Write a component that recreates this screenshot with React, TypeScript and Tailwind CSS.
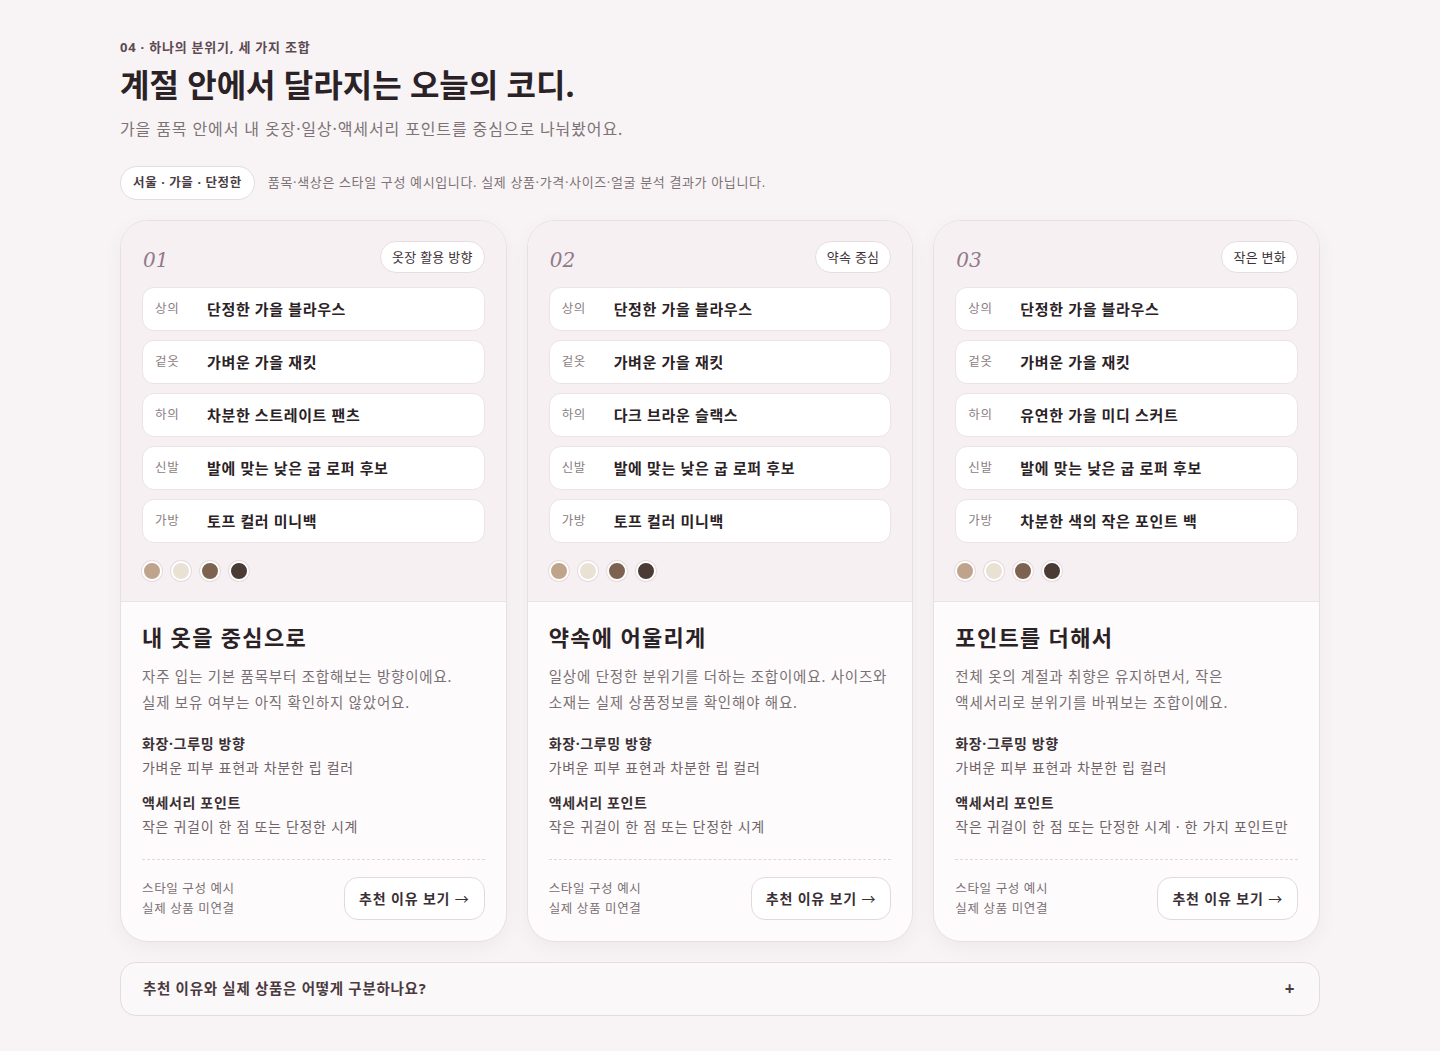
import React from 'react';

interface OutfitItem {
    label: string;
    value: string;
}

interface OutfitPlan {
    no: string;
    tag: string;
    items: OutfitItem[];
    title: string;
    body: string[];
    grooming: string;
    accessory: string;
}

const swatches = ['#bfa48b', '#e9e1d4', '#7d634f', '#4a3b35'];

const plans: OutfitPlan[] = [
    {
        no: '01',
        tag: '옷장 활용 방향',
        items: [
            {label: '상의', value: '단정한 가을 블라우스'},
            {label: '겉옷', value: '가벼운 가을 재킷'},
            {label: '하의', value: '차분한 스트레이트 팬츠'},
            {label: '신발', value: '발에 맞는 낮은 굽 로퍼 후보'},
            {label: '가방', value: '토프 컬러 미니백'},
        ],
        title: '내 옷을 중심으로',
        body: ['자주 입는 기본 품목부터 조합해보는 방향이에요.', '실제 보유 여부는 아직 확인하지 않았어요.'],
        grooming: '가벼운 피부 표현과 차분한 립 컬러',
        accessory: '작은 귀걸이 한 점 또는 단정한 시계',
    },
    {
        no: '02',
        tag: '약속 중심',
        items: [
            {label: '상의', value: '단정한 가을 블라우스'},
            {label: '겉옷', value: '가벼운 가을 재킷'},
            {label: '하의', value: '다크 브라운 슬랙스'},
            {label: '신발', value: '발에 맞는 낮은 굽 로퍼 후보'},
            {label: '가방', value: '토프 컬러 미니백'},
        ],
        title: '약속에 어울리게',
        body: ['일상에 단정한 분위기를 더하는 조합이에요. 사이즈와', '소재는 실제 상품정보를 확인해야 해요.'],
        grooming: '가벼운 피부 표현과 차분한 립 컬러',
        accessory: '작은 귀걸이 한 점 또는 단정한 시계',
    },
    {
        no: '03',
        tag: '작은 변화',
        items: [
            {label: '상의', value: '단정한 가을 블라우스'},
            {label: '겉옷', value: '가벼운 가을 재킷'},
            {label: '하의', value: '유연한 가을 미디 스커트'},
            {label: '신발', value: '발에 맞는 낮은 굽 로퍼 후보'},
            {label: '가방', value: '차분한 색의 작은 포인트 백'},
        ],
        title: '포인트를 더해서',
        body: ['전체 옷의 계절과 취향은 유지하면서, 작은', '액세서리로 분위기를 바꿔보는 조합이에요.'],
        grooming: '가벼운 피부 표현과 차분한 립 컬러',
        accessory: '작은 귀걸이 한 점 또는 단정한 시계 · 한 가지 포인트만',
    },
];

const OutfitCard: React.FC<{plan: OutfitPlan}> = ({plan}) => (
    <div className="flex flex-col overflow-hidden rounded-[28px] border border-[#e9dfe3] bg-[#fdfbfc] shadow-[0_6px_18px_rgba(90,60,70,0.06)]">
        {/* top: outfit pieces */}
        <div className="border-b border-[#ebe2e5] bg-[#f6f0f2] px-[21px] pt-5 pb-5">
            <div className="flex items-center justify-between">
                <span className="pl-px pt-[6px] font-['DejaVu_Serif',serif] text-[20px] italic leading-none tracking-normal text-[#92798a]">
                    {plan.no}
                </span>
                <span className="rounded-full border border-[#e6dde0] bg-white px-[11px] py-[6px] text-[13px] leading-[18px] tracking-[0.02em] text-[#3d3237]">
                    {plan.tag}
                </span>
            </div>
            <div className="mt-[14px] flex flex-col gap-[9px]">
                {plan.items.map((item, i) => (
                    <div key={i} className="flex h-[44px] items-center rounded-[12px] border border-[#ebe3e6] bg-white px-[12px]">
                        <span className="w-[52px] text-[12.5px] text-[#8a7d82]">{item.label}</span>
                        <span className="text-[15px] font-bold text-[#2b2226]">{item.value}</span>
                    </div>
                ))}
            </div>
            <div className="mt-[18px] flex gap-[9px]">
                {swatches.map((c, i) => (
                    <span key={i} className="h-[20px] w-[20px] rounded-full border-2 border-white shadow-[0_0_0_1px_#e6dcdf]" style={{backgroundColor: c}}/>
                ))}
            </div>
        </div>

        {/* bottom: description */}
        <div className="flex flex-1 flex-col px-[21px] pt-[19px] pb-[21px]">
            <h3 className="text-[22px] font-bold leading-[32px] tracking-[0.06em] text-[#2b2226]">{plan.title}</h3>
            <p className="mt-[10px] text-[14.5px] leading-[26px] tracking-[0.055em] text-[#7a6f73]">
                {plan.body[0]}<br/>{plan.body[1]}
            </p>
            <div className="mt-[18px]">
                <div className="text-[14px] font-bold leading-[22px] text-[#3a3034]">화장·그루밍 방향</div>
                <div className="mt-[2px] text-[14px] leading-[22px] tracking-[0.05em] text-[#6f6367]">{plan.grooming}</div>
            </div>
            <div className="mt-[13px]">
                <div className="text-[14px] font-bold leading-[22px] text-[#3a3034]">액세서리 포인트</div>
                <div className="mt-[2px] text-[14px] leading-[22px] tracking-[0.05em] text-[#6f6367]">{plan.accessory}</div>
            </div>
            <div className="mt-[21px] border-t border-dashed border-[#e2d8db]"/>
            <div className="mt-[17px] flex items-center justify-between">
                <div className="text-[12.5px] leading-[20px] text-[#7a6f73]">
                    <div>스타일 구성 예시</div>
                    <div>실제 상품 미연결</div>
                </div>
                <button className="h-[43px] rounded-[14px] border border-[#e3d9dc] bg-white px-[14px] text-[14px] font-bold tracking-[0.06em] text-[#3a2f34]">
                    추천 이유 보기 <span className="font-normal">→</span>
                </button>
            </div>
        </div>
    </div>
);

const App: React.FC = () => {
    return (
        <div className="min-h-screen bg-[#f8f4f5] font-['Noto_Sans','Noto_Sans_CJK_KR',sans-serif] tracking-[0.04em]">
            <div className="mx-auto w-[1200px] pt-[38px] pb-[36px]">
                <div className="text-[13px] font-bold leading-[18px] tracking-[0.06em] text-[#5d4a53]">04 · 하나의 분위기, 세 가지 조합</div>
                <h2 className="mt-[8px] text-[32px] font-bold leading-[42px] tracking-normal text-[#2a2226]">계절 안에서 달라지는 오늘의 코디.</h2>
                <p className="mt-[11px] text-[16px] leading-[24px] tracking-[0.055em] text-[#7d7276]">
                    가을 품목 안에서 내 옷장·일상·액세서리 포인트를 중심으로 나눠봤어요.
                </p>

                <div className="mt-[25px] flex items-center gap-[13px]">
                    <span className="rounded-full border border-[#e6dcdf] bg-white px-[12px] py-[7px] text-[12.5px] font-bold leading-[18px] text-[#4a3d43]">
                        서울 · 가을 · 단정한
                    </span>
                    <span className="text-[13px] text-[#7d7276]">
                        품목·색상은 스타일 구성 예시입니다. 실제 상품·가격·사이즈·얼굴 분석 결과가 아닙니다.
                    </span>
                </div>

                <div className="mt-[20px] grid grid-cols-3 gap-[20px]">
                    {plans.map((plan) => (
                        <OutfitCard key={plan.no} plan={plan}/>
                    ))}
                </div>

                <div className="mt-[20px] flex h-[54px] items-center justify-between rounded-[16px] border border-[#e6dcdf] bg-[#fbf8f9] px-[22px]">
                    <span className="text-[14.5px] font-bold tracking-[0.05em] text-[#4a3a40]">추천 이유와 실제 상품은 어떻게 구분하나요?</span>
                    <span className="pr-[2px] text-[17px] font-bold text-[#4a3a40]">+</span>
                </div>
            </div>
        </div>
    );
};

export default App;
